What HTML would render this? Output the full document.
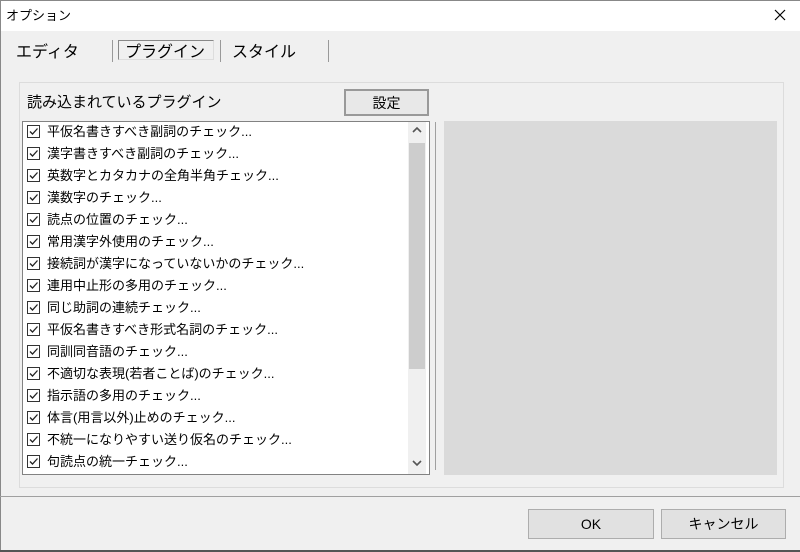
<!DOCTYPE html>
<html><head><meta charset="utf-8"><style>
*{box-sizing:border-box;margin:0;padding:0}
body{width:800px;height:552px;overflow:hidden;background:#f0f0f0;font-family:"Liberation Sans","Noto Sans CJK JP",sans-serif;color:#000;position:relative}
.a{position:absolute}
.t{font-size:15px;white-space:nowrap}
.row{position:absolute;left:4px;height:22px;font-size:13px;line-height:22px;white-space:nowrap}
.cb{display:inline-block;width:13px;height:13px;border:1px solid #333;vertical-align:-2px;margin-right:7px;position:relative;background:#fff}
.cb svg{position:absolute;left:0;top:0}
.btn{position:absolute;border:1px solid #adadad;background:#e1e1e1;font-size:14px;text-align:center}
</style></head><body>
<div class="a" style="left:0;top:0;width:800px;height:31px;background:#fff;border-left:1px solid #888;border-top:1px solid #888"></div>
<div class="a t" style="left:6px;top:5px;font-size:13px">オプション</div>
<svg class="a" style="left:774px;top:9px" width="12" height="12"><path d="M1 1L11 11M11 1L1 11" stroke="#000" stroke-width="1.2"/></svg>
<div class="a" style="left:0;top:31px;width:1px;height:521px;background:#888"></div>
<div class="a" style="left:0;top:550px;width:800px;height:2px;background:#555"></div>

<div class="a t" style="left:16px;top:38px;font-size:16px">エディタ</div>
<div class="a" style="left:112px;top:40px;width:1px;height:22px;background:#999"></div>
<div class="a" style="left:118px;top:40px;width:96px;height:20px;border:1px solid #888;border-right-color:#ddd;border-bottom-color:#ddd"></div>
<div class="a t" style="left:125px;top:38px;font-size:16px">プラグイン</div>
<div class="a" style="left:220px;top:40px;width:1px;height:22px;background:#999"></div>
<div class="a t" style="left:232px;top:38px;font-size:16px">スタイル</div>
<div class="a" style="left:328px;top:40px;width:1px;height:22px;background:#999"></div>

<div class="a" style="left:19px;top:82px;width:765px;height:406px;border:1px solid #dcdcdc"></div>
<div class="a t" style="left:27px;top:91px;font-size:15px">読み込まれているプラグイン</div>
<div class="btn" style="left:344px;top:89px;width:85px;height:27px;line-height:25px;border:2px solid #999;background:#e8e8e8">設定</div>

<div class="a" style="left:22px;top:121px;width:408px;height:354px;background:#fff;border:1px solid #828282"></div>
<div class="a" style="left:408px;top:122px;width:18px;height:352px;background:#f0f0f0"></div>
<div class="a" style="left:409px;top:143px;width:16px;height:226px;background:#cdcdcd"></div>
<svg class="a" style="left:412px;top:126px" width="10" height="8"><path d="M1 6L5 2L9 6" stroke="#555" stroke-width="1.6" fill="none"/></svg>
<svg class="a" style="left:412px;top:459px" width="10" height="8"><path d="M1 2L5 6L9 2" stroke="#555" stroke-width="1.6" fill="none"/></svg>
<div class="a" style="left:435px;top:122px;width:1px;height:348px;background:#a0a0a0"></div>
<div class="a" style="left:444px;top:121px;width:333px;height:354px;background:#dadada"></div>

<div id="list" class="a" style="left:23px;top:121px;width:385px;height:352px"></div>

<div class="a" style="left:0;top:496px;width:800px;height:1px;background:#a0a0a0"></div>
<div class="btn" style="left:528px;top:509px;width:126px;height:30px;line-height:28px">OK</div>
<div class="btn" style="left:661px;top:509px;width:125px;height:30px;line-height:28px">キャンセル</div>
<script>
var items=["平仮名書きすべき副詞のチェック...","漢字書きすべき副詞のチェック...","英数字とカタカナの全角半角チェック...","漢数字のチェック...","読点の位置のチェック...","常用漢字外使用のチェック...","接続詞が漢字になっていないかのチェック...","連用中止形の多用のチェック...","同じ助詞の連続チェック...","平仮名書きすべき形式名詞のチェック...","同訓同音語のチェック...","不適切な表現(若者ことば)のチェック...","指示語の多用のチェック...","体言(用言以外)止めのチェック...","不統一になりやすい送り仮名のチェック...","句読点の統一チェック..."];
var h="";
items.forEach(function(s,i){h+='<div class="row" style="top:'+(i*22)+'px"><span class="cb"><svg width="11" height="11"><path d="M2 5.5L4.5 8L9.5 2.5" stroke="#222" stroke-width="1.3" fill="none"/></svg></span>'+s+'</div>';});
document.getElementById('list').innerHTML=h;
</script>
</body></html>
